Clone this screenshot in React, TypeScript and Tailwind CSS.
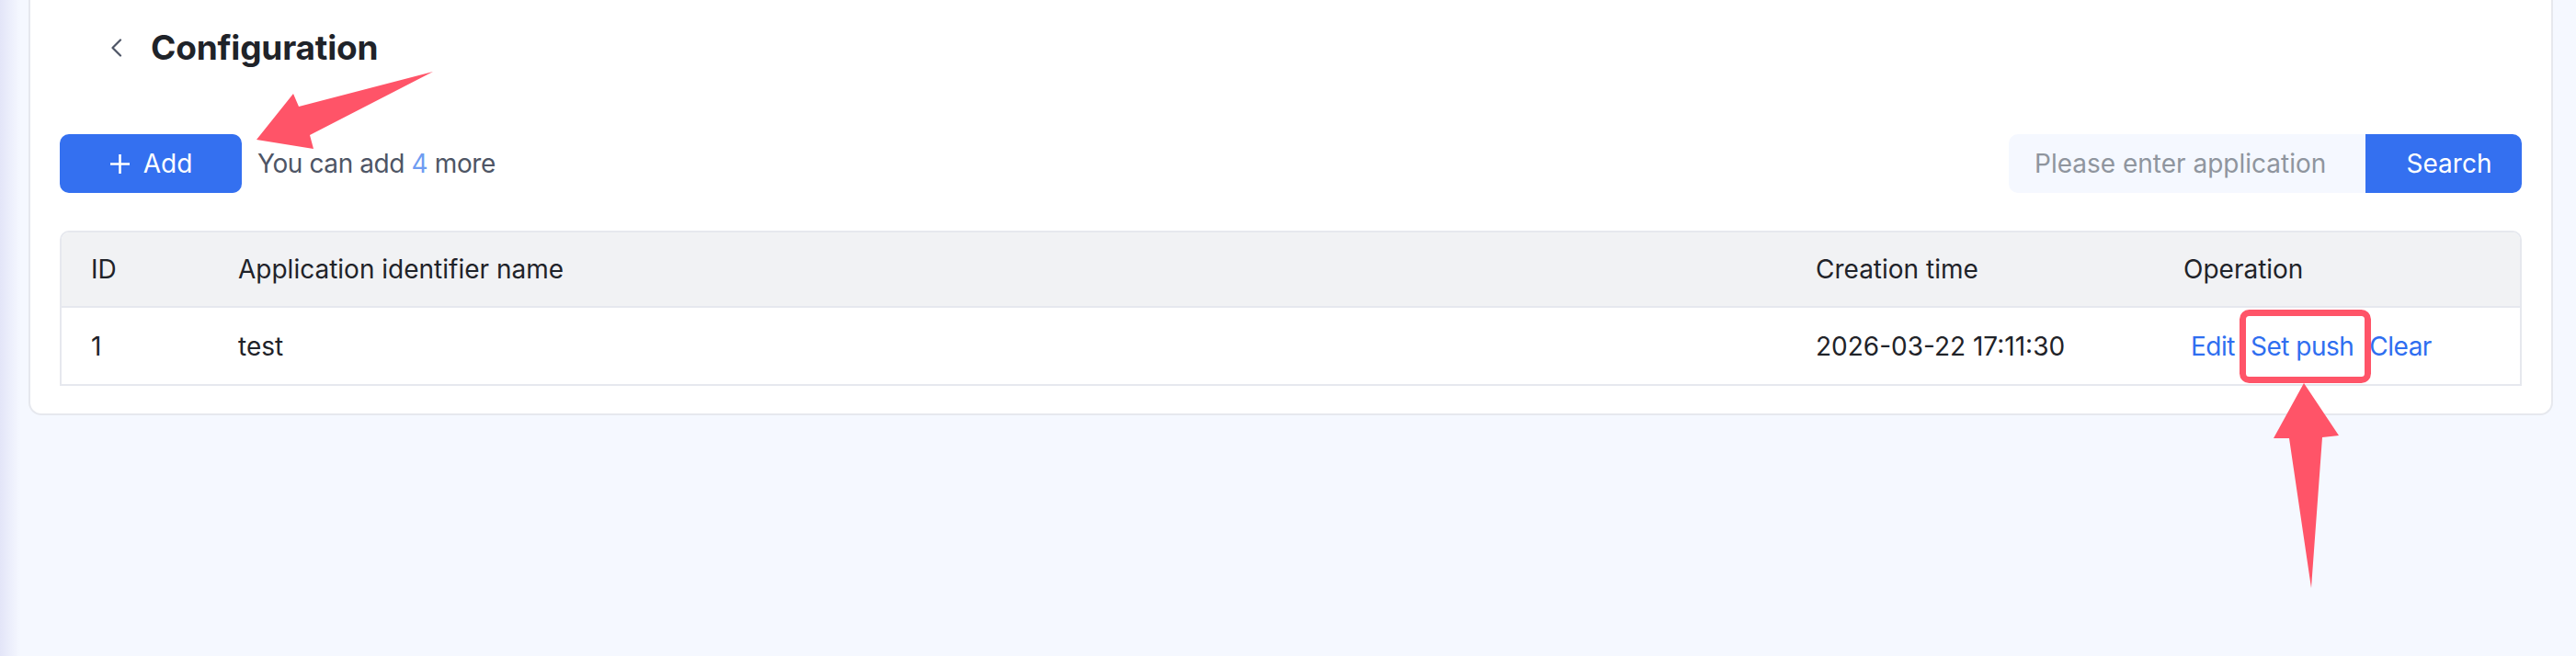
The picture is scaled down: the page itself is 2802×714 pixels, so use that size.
import React from 'react';

const font = { fontFamily: 'Inter, "Noto Sans", sans-serif' };

const columns = [
  { key: 'id', label: 'ID', width: 'w-[160px]' },
  { key: 'name', label: 'Application identifier name', width: 'flex-1' },
  { key: 'time', label: 'Creation time', width: 'w-[400px]' },
  { key: 'op', label: 'Operation', width: 'w-[398px]' },
];

const rows = [{ id: '1', name: 'test', time: '2026-03-22 17:11:30' }];

const Annotations: React.FC = () => (
  <svg
    className="pointer-events-none absolute left-0 top-0"
    width={2802}
    height={714}
    viewBox="0 0 2802 714"
  >
    {/* arrow pointing at the Add button */}
    <polygon
      points="279,152 319,102 325,116 471,78 337,147 341,162"
      fill="#ff5468"
    />
    {/* box around Set push */}
    <rect
      x={2439.5}
      y={340.5}
      width={136}
      height={73}
      rx={7}
      fill="none"
      stroke="#ff5468"
      strokeWidth={7}
    />
    {/* arrow pointing up at the box */}
    <polygon
      points="2506,417 2544,474 2526,476 2514,640 2490,477 2473,477"
      fill="#ff5468"
    />
  </svg>
);

export default function App() {
  return (
    <div className="relative flex h-[714px] w-full bg-[#f5f8ff]" style={font}>
      <div className="w-[22px] shrink-0 bg-gradient-to-r from-[#e3e5f8] to-[#f5f8ff]" />

      <div className="flex-1 pl-[9px] pr-[25px]">
        <div className="rounded-b-[14px] border-x-2 border-b-2 border-[#e6e8ee] bg-white px-[32px] pt-[28px] pb-[30px]">
          {/* title */}
          <div className="flex h-[48px] items-center gap-[31px] pl-[55px]">
            <svg width="13" height="20" viewBox="0 0 13 20" className="shrink-0">
              <path d="M11 1.5 L2.5 10 L11 18.5" fill="none" stroke="#4e5566" strokeWidth="2.2" strokeLinecap="round" strokeLinejoin="round" />
            </svg>
            <h1 className="text-[37px] font-bold leading-[48px] tracking-[-0.2px] text-[#1f2329]">Configuration</h1>
          </div>

          {/* toolbar */}
          <div className="mt-[70px] flex h-[64px] items-center justify-between">
            <div className="flex items-center gap-[17px]">
              <button className="flex h-[64px] w-[198px] items-center justify-center gap-[14px] rounded-[10px] bg-[#3470f0] text-[28px] text-white">
                <svg width="23" height="23" viewBox="0 0 23 23">
                  <path d="M11.5 1 V22 M1 11.5 H22" stroke="white" strokeWidth="2.6" />
                </svg>
                <span>Add</span>
              </button>
              <span className="text-[28px] tracking-[-0.4px] text-[#4e5565]">
                You can add <span className="text-[#6e9cf2]">4</span> more
              </span>
            </div>

            <div className="flex h-[64px]">
              <input
                placeholder="Please enter application"
                className="h-full w-[388px] rounded-l-[10px] bg-[#f5f8ff] pl-[28px] text-[28px] text-[#1f2329] outline-none placeholder:text-[#8f959e]"
              />
              <button className="h-full w-[170px] rounded-r-[10px] bg-[#3470f0] pl-[12px] text-[28px] text-white">
                Search
              </button>
            </div>
          </div>

          {/* table */}
          <div className="mt-[41px] overflow-hidden rounded-t-[10px] border-2 border-[#e6e8ee]">
            <div className="flex h-[82px] items-center border-b-2 border-[#e6e8ee] bg-[#f1f2f4]">
              {columns.map((c) => (
                <div key={c.key} className={`${c.width} pl-[32px] text-[28px] text-[#1f2329]`}>
                  {c.label}
                </div>
              ))}
            </div>
            {rows.map((r) => (
              <div key={r.id} className="flex h-[83px] items-center bg-white text-[28px] text-[#1f2329]">
                <div className="w-[160px] pl-[32px]">{r.id}</div>
                <div className="flex-1 pl-[32px]">{r.name}</div>
                <div className="w-[400px] pl-[32px]">{r.time}</div>
                <div className="flex w-[398px] gap-[17px] pl-[40px] text-[28px] tracking-[-0.5px] text-[#2f6ef0]">
                  <button>Edit</button>
                  <button>Set push</button>
                  <button>Clear</button>
                </div>
              </div>
            ))}
          </div>
        </div>
      </div>

      <Annotations />
    </div>
  );
}
